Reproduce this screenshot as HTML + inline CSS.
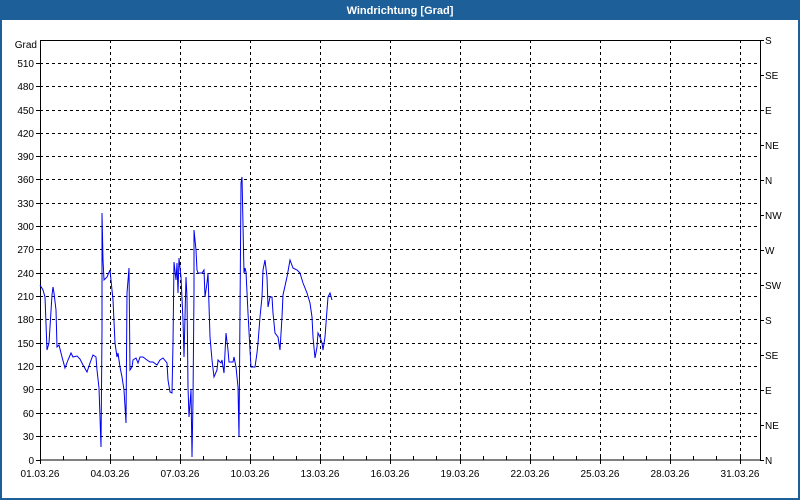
<!DOCTYPE html>
<html><head><meta charset="utf-8"><style>
html,body{margin:0;padding:0;width:800px;height:500px;overflow:hidden;background:#fff}
svg{display:block;font-family:"Liberation Sans","DejaVu Sans",sans-serif}
</style></head><body>
<svg width="800" height="500" xmlns="http://www.w3.org/2000/svg">
<rect x="0" y="0" width="800" height="500" fill="#1d5f98"/>
<rect x="2" y="20" width="796" height="478" fill="#fff"/>
<text x="400" y="14" fill="#fff" font-size="11" font-weight="bold" text-anchor="middle">Windrichtung [Grad]</text>
<g stroke="#000" stroke-width="1" stroke-dasharray="3,3" shape-rendering="crispEdges">
<path d="M40 63.5H760M40 86.5H760M40 110.5H760M40 133.5H760M40 156.5H760M40 179.5H760M40 203.5H760M40 226.5H760M40 249.5H760M40 273.5H760M40 296.5H760M40 319.5H760M40 343.5H760M40 366.5H760M40 389.5H760M40 413.5H760M40 436.5H760"/>
<path d="M110.5 40V460M180.5 40V460M250.5 40V460M320.5 40V460M390.5 40V460M460.5 40V460M530.5 40V460M600.5 40V460M670.5 40V460M740.5 40V460"/>
</g>
<g stroke="#000" stroke-width="1" shape-rendering="crispEdges" fill="none">
<rect x="40.5" y="40.5" width="720" height="419.5"/>
<path d="M36 63.5H40M36 86.5H40M36 110.5H40M36 133.5H40M36 156.5H40M36 179.5H40M36 203.5H40M36 226.5H40M36 249.5H40M36 273.5H40M36 296.5H40M36 319.5H40M36 343.5H40M36 366.5H40M36 389.5H40M36 413.5H40M36 436.5H40M36 460.5H40"/>
<path d="M760 40.5H764M760 75.5H764M760 110.5H764M760 145.5H764M760 180.5H764M760 215.5H764M760 250.5H764M760 285.5H764M760 320.5H764M760 355.5H764M760 390.5H764M760 425.5H764M760 460.5H764"/>
<path d="M63.5 456V460M86.5 456V460M110.5 456V464M133.5 456V460M156.5 456V460M180.5 456V464M203.5 456V460M226.5 456V460M250.5 456V464M273.5 456V460M296.5 456V460M320.5 456V464M343.5 456V460M366.5 456V460M390.5 456V464M413.5 456V460M436.5 456V460M460.5 456V464M483.5 456V460M506.5 456V460M530.5 456V464M553.5 456V460M576.5 456V460M600.5 456V464M623.5 456V460M646.5 456V460M670.5 456V464M693.5 456V460M716.5 456V460M740.5 456V464M40.5 456V464"/>
</g>
<g font-size="10" fill="#000" text-anchor="end">
<text x="37" y="48">Grad</text>
<text x="34" y="67">510</text><text x="34" y="90">480</text><text x="34" y="114">450</text><text x="34" y="137">420</text><text x="34" y="160">390</text><text x="34" y="183">360</text><text x="34" y="207">330</text><text x="34" y="230">300</text><text x="34" y="253">270</text><text x="34" y="277">240</text><text x="34" y="300">210</text><text x="34" y="323">180</text><text x="34" y="347">150</text><text x="34" y="370">120</text><text x="34" y="393">90</text><text x="34" y="417">60</text><text x="34" y="440">30</text><text x="34" y="464">0</text>
</g>
<g font-size="10" fill="#000">
<text x="765" y="44">S</text><text x="765" y="79">SE</text><text x="765" y="114">E</text><text x="765" y="149">NE</text><text x="765" y="184">N</text><text x="765" y="219">NW</text><text x="765" y="254">W</text><text x="765" y="289">SW</text><text x="765" y="324">S</text><text x="765" y="359">SE</text><text x="765" y="394">E</text><text x="765" y="429">NE</text><text x="765" y="464">N</text>
</g>
<g font-size="10" fill="#000" text-anchor="middle">
<text x="40" y="477">01.03.26</text><text x="110" y="477">04.03.26</text><text x="180" y="477">07.03.26</text><text x="250" y="477">10.03.26</text><text x="320" y="477">13.03.26</text><text x="390" y="477">16.03.26</text><text x="460" y="477">19.03.26</text><text x="530" y="477">22.03.26</text><text x="600" y="477">25.03.26</text><text x="670" y="477">28.03.26</text><text x="740" y="477">31.03.26</text>
</g>
<polyline fill="none" stroke="#0000ee" stroke-width="1" points="40,285 43,290 45,297 47,350 49,343 52,295 53,287 54,293 56,310 57,347 59,345 62,357 65,368 68,360 71,353 73,357 77,356 80,359 83,365 87,372 90,363 93,355 96,357 97,370 99,388 100,417 101,447 102,330 102,213 103,260 104,280 107,277 110,270 111,280 113,300 115,343 117,357 118,353 120,367 122,377 124,390 126,423 127,293 129,268 130,370 132,367 133,360 136,358 138,363 140,357 143,357 147,360 150,362 153,362 157,365 160,360 163,358 167,363 168,380 170,392 172,393 173,343 174,262 176,280 177,263 178,293 179,258 181,277 183,320 184,357 186,277 187,297 188,387 189,417 191,390 192,457 193,400 194,290 194,230 196,250 197,270 198,273 202,273 204,270 205,297 207,283 208,273 210,337 212,360 214,377 217,370 218,360 221,363 222,360 224,373 226,333 228,350 229,362 233,362 234,357 236,367 238,387 239,437 240,313 241,183 242,177 244,273 245,268 246,272 248,313 250,350 251,367 255,367 257,353 258,343 260,317 262,297 263,270 265,260 267,277 268,307 270,297 272,297 273,313 275,333 278,337 280,350 282,317 283,295 287,277 290,260 293,268 297,270 300,273 303,283 307,293 310,303 312,317 313,337 315,358 317,347 318,333 320,337 322,343 323,350 325,337 327,310 328,297 330,293 332,300"/>
</svg>
</body></html>
